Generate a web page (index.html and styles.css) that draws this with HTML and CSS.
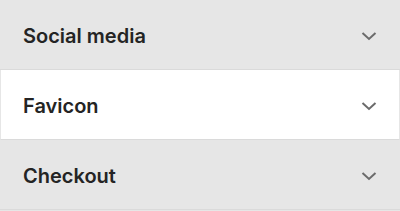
FILE: index.html
```html
<!DOCTYPE html>
<html>
<head>
<meta charset="utf-8">
<link rel="stylesheet" href="styles.css">
</head>
<body>
<div class="list">
  <div class="item">
    <span class="label">Social media</span>
    <svg class="chev" width="16" height="10" viewBox="0 0 16 10"><path d="M1.5 2 L8 8 L14.5 2" fill="none" stroke="#6b6b6b" stroke-width="2"/></svg>
  </div>
  <div class="item active">
    <span class="label">Favicon</span>
    <svg class="chev" width="16" height="10" viewBox="0 0 16 10"><path d="M1.5 2 L8 8 L14.5 2" fill="none" stroke="#6b6b6b" stroke-width="2"/></svg>
  </div>
  <div class="item">
    <span class="label">Checkout</span>
    <svg class="chev" width="16" height="10" viewBox="0 0 16 10"><path d="M1.5 2 L8 8 L14.5 2" fill="none" stroke="#6b6b6b" stroke-width="2"/></svg>
  </div>
</div>
</body>
</html>
```
FILE: styles.css
```css
html, body {
  margin: 0;
  padding: 0;
  background: #e6e6e6;
}
body {
  font-family: Inter, "Noto Sans", sans-serif;
}
.list {
  display: flex;
  flex-direction: column;
}
.item {
  display: flex;
  align-items: center;
  justify-content: space-between;
  height: 69px;
  padding: 2px 23px 0 23px;
  box-sizing: border-box;
  height: 70px;
  background: #e6e6e6;
  border-bottom: 1px solid #dadada;
}
.item.active {
  background: #ffffff;
  border-left: 1px solid #e6e6e6;
  border-right: 1px solid #e6e6e6;
  padding-left: 22px;
  padding-right: 22px;
}
.label {
  font-size: 20px;
  font-weight: 600;
  color: #242424;
  letter-spacing: 0;
}
.chev {
  display: block;
}
```
